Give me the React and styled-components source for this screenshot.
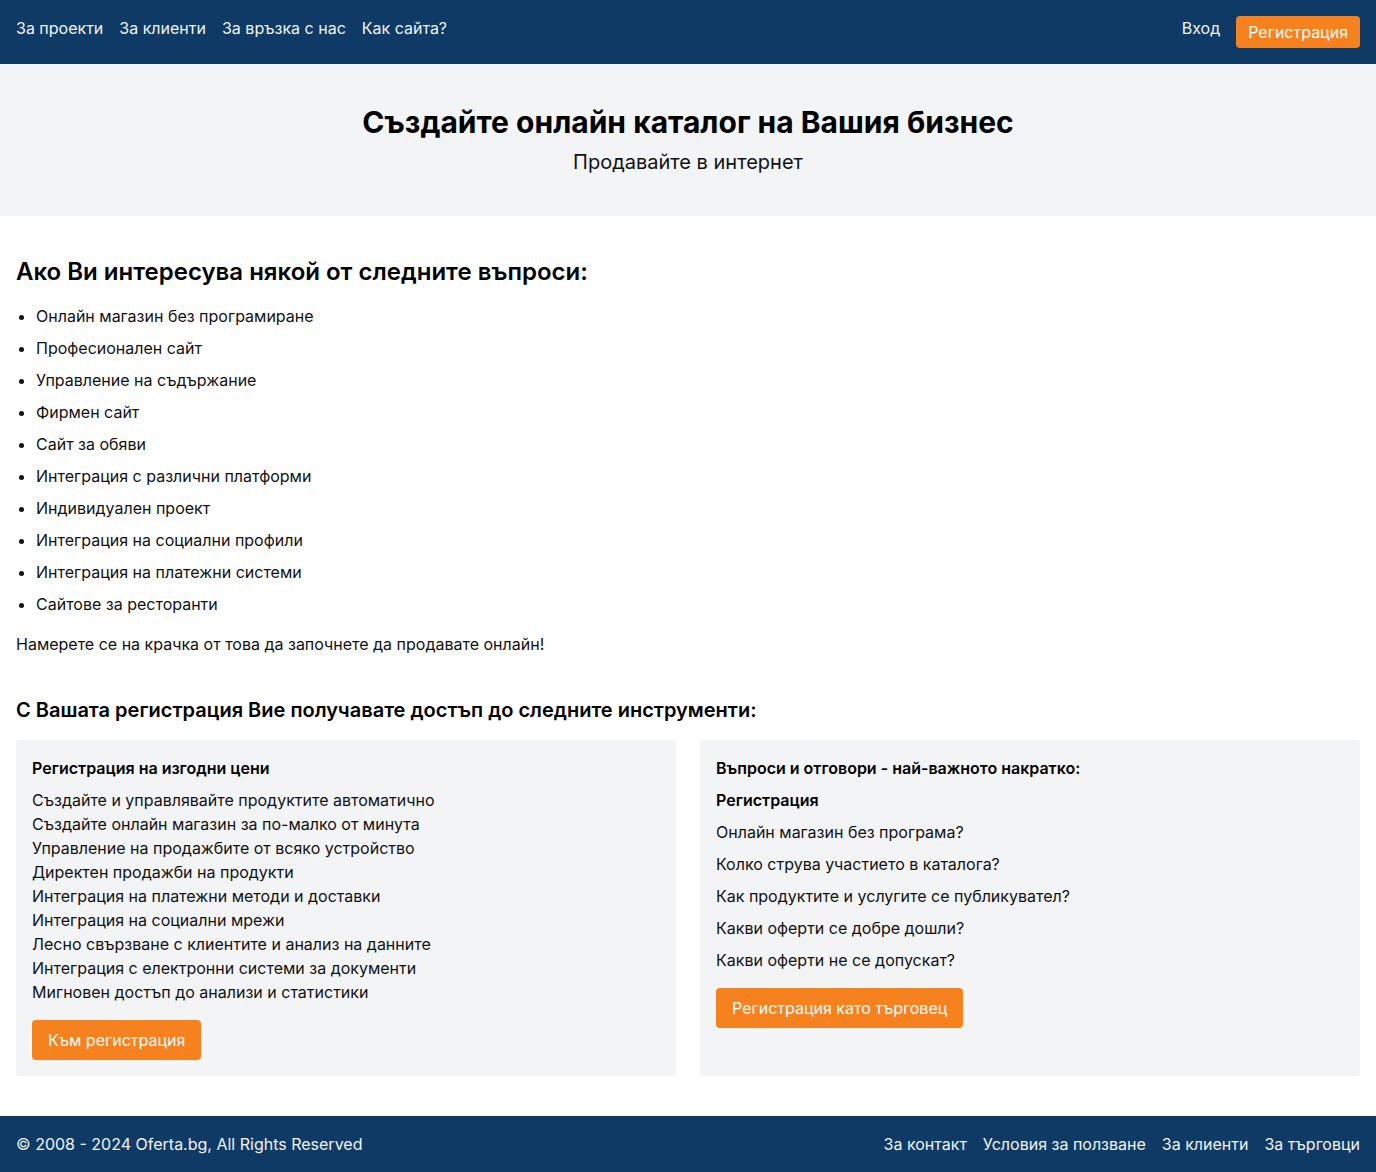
import React from "react";
import styled, { createGlobalStyle } from "styled-components";

const NAVY = "#0f3a65";
const ORANGE = "#f5821f";
const LIGHT = "#f3f4f6";

const GlobalStyle = createGlobalStyle`
  * { box-sizing: border-box; }
  body {
    margin: 0;
    font-family: Inter, "Noto Sans", "Liberation Sans", sans-serif;
    font-size: 16px;
    line-height: 24px;
    color: #111;
    background: #fff;
  }
  a { text-decoration: none; color: inherit; }
`;

const questions = [
  "Онлайн магазин без програмиране",
  "Професионален сайт",
  "Управление на съдържание",
  "Фирмен сайт",
  "Сайт за обяви",
  "Интеграция с различни платформи",
  "Индивидуален проект",
  "Интеграция на социални профили",
  "Интеграция на платежни системи",
  "Сайтове за ресторанти",
];

const tools = [
  "Създайте и управлявайте продуктите автоматично",
  "Създайте онлайн магазин за по-малко от минута",
  "Управление на продажбите от всяко устройство",
  "Директен продажби на продукти",
  "Интеграция на платежни методи и доставки",
  "Интеграция на социални мрежи",
  "Лесно свързване с клиентите и анализ на данните",
  "Интеграция с електронни системи за документи",
  "Мигновен достъп до анализи и статистики",
];

const faq = [
  "Онлайн магазин без програма?",
  "Колко струва участието в каталога?",
  "Как продуктите и услугите се публикувател?",
  "Какви оферти се добре дошли?",
  "Какви оферти не се допускат?",
];

export default function App() {
  return (
    <>
      <GlobalStyle />
      <TopBar>
        <NavGroup>
          <NavLink href="#">За проекти</NavLink>
          <NavLink href="#">За клиенти</NavLink>
          <NavLink href="#">За връзка с нас</NavLink>
          <NavLink href="#">Как сайта?</NavLink>
        </NavGroup>
        <NavGroup>
          <NavLink href="#">Вход</NavLink>
          <Button href="#" size="sm">Регистрация</Button>
        </NavGroup>
      </TopBar>

      <Hero>
        <HeroTitle>Създайте онлайн каталог на Вашия бизнес</HeroTitle>
        <HeroSub>Продавайте в интернет</HeroSub>
      </Hero>

      <Main>
        <SectionTitle>Ако Ви интересува някой от следните въпроси:</SectionTitle>
        <BulletList>
          {questions.map((q) => (
            <li key={q}>{q}</li>
          ))}
        </BulletList>
        <Lead>Намерете се на крачка от това да започнете да продавате онлайн!</Lead>

        <SubTitle>С Вашата регистрация Вие получавате достъп до следните инструменти:</SubTitle>
        <Cards>
          <Card>
            <CardTitle>Регистрация на изгодни цени</CardTitle>
            <PlainList>
              {tools.map((t) => (
                <li key={t}>{t}</li>
              ))}
            </PlainList>
            <Button href="#">Към регистрация</Button>
          </Card>
          <Card>
            <CardTitle>Въпроси и отговори - най-важното накратко:</CardTitle>
            <CardTitle>Регистрация</CardTitle>
            <FaqList>
              {faq.map((f) => (
                <li key={f}>{f}</li>
              ))}
            </FaqList>
            <Button href="#">Регистрация като търговец</Button>
          </Card>
        </Cards>
      </Main>

      <Footer>
        <span>© 2008 - 2024 Oferta.bg, All Rights Reserved</span>
        <NavGroup>
          <NavLink href="#">За контакт</NavLink>
          <NavLink href="#">Условия за ползване</NavLink>
          <NavLink href="#">За клиенти</NavLink>
          <NavLink href="#">За търговци</NavLink>
        </NavGroup>
      </Footer>
    </>
  );
}

const TopBar = styled.header`
  height: 64px;
  background: ${NAVY};
  color: #f3f4f6;
  padding: 16px;
  display: flex;
  justify-content: space-between;
  align-items: flex-start;
`;

const NavGroup = styled.nav`
  display: flex;
  align-items: flex-start;
  gap: 16px;
`;

const NavLink = styled.a`
  color: #f3f4f6;
  font-size: 16px;
  line-height: 24px;
`;

const Button = styled.a`
  display: inline-block;
  background: ${ORANGE};
  color: #fff;
  border-radius: 4px;
  font-size: 16px;
  line-height: 24px;
  padding: ${(p) => (p.size === "sm" ? "4px 12px" : "8px 16px")};
  align-self: flex-start;
`;

const Hero = styled.section`
  background: ${LIGHT};
  padding: 40px 16px;
  text-align: center;
`;

const HeroTitle = styled.h1`
  margin: 0;
  font-size: 30px;
  line-height: 36px;
  font-weight: 700;
  color: #000;
`;

const HeroSub = styled.p`
  margin: 8px 0 0;
  font-size: 20px;
  line-height: 28px;
`;

const Main = styled.main`
  padding: 40px 16px;
`;

const SectionTitle = styled.h2`
  margin: 0;
  font-size: 24px;
  line-height: 32px;
  font-weight: 600;
  color: #000;
`;

const BulletList = styled.ul`
  margin: 16px 0 0;
  padding-left: 20px;
  li + li { margin-top: 8px; }
`;

const Lead = styled.p`
  margin: 16px 0 0;
`;

const SubTitle = styled.h3`
  margin: 40px 0 0;
  font-size: 20px;
  line-height: 28px;
  font-weight: 600;
  color: #000;
`;

const Cards = styled.div`
  margin-top: 16px;
  display: grid;
  grid-template-columns: 1fr 1fr;
  gap: 24px;
`;

const Card = styled.div`
  background: ${LIGHT};
  border-radius: 4px;
  padding: 16px;
  display: flex;
  flex-direction: column;
  gap: 8px;
`;

const CardTitle = styled.div`
  font-weight: 600;
  color: #000;
`;

const PlainList = styled.ul`
  list-style: none;
  margin: 0 0 8px;
  padding: 0;
`;

const FaqList = styled.ul`
  list-style: none;
  margin: 0 0 8px;
  padding: 0;
  display: flex;
  flex-direction: column;
  gap: 8px;
`;

const Footer = styled.footer`
  background: ${NAVY};
  color: #f3f4f6;
  padding: 16px;
  display: flex;
  justify-content: space-between;
  align-items: center;
`;
